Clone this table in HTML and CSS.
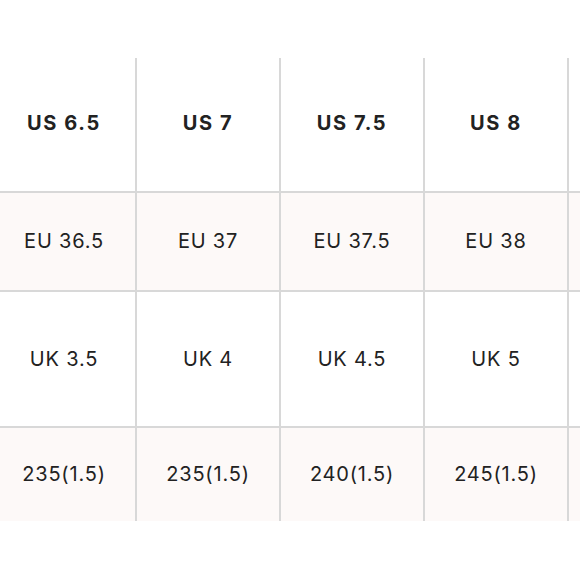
FILE: index.html
```html
<!DOCTYPE html>
<html>
<head>
<meta charset="utf-8">
<link rel="stylesheet" href="styles.css">
</head>
<body>
<div class="wrap">
  <div class="table">
    <div class="cell head">US 6.5</div>
    <div class="cell head">US 7</div>
    <div class="cell head">US 7.5</div>
    <div class="cell head">US 8</div>
    <div class="cell head"></div>

    <div class="cell alt">EU 36.5</div>
    <div class="cell alt">EU 37</div>
    <div class="cell alt">EU 37.5</div>
    <div class="cell alt">EU 38</div>
    <div class="cell alt"></div>

    <div class="cell">UK 3.5</div>
    <div class="cell">UK 4</div>
    <div class="cell">UK 4.5</div>
    <div class="cell">UK 5</div>
    <div class="cell"></div>

    <div class="cell alt">235(1.5)</div>
    <div class="cell alt">235(1.5)</div>
    <div class="cell alt">240(1.5)</div>
    <div class="cell alt">245(1.5)</div>
    <div class="cell alt"></div>
  </div>
</div>
</body>
</html>
```
FILE: styles.css
```css
html, body {
  margin: 0;
  padding: 0;
  background: #ffffff;
  overflow: hidden;
}
.wrap {
  width: 580px;
  height: 580px;
  overflow: hidden;
  padding-top: 58px;
  box-sizing: border-box;
}
.table {
  display: grid;
  grid-template-columns: repeat(5, 142px);
  grid-template-rows: 133px 97px 134px 93px;
  gap: 2px;
  background: #d8d8d8;
  margin-left: -7px;
  width: max-content;
}
.cell {
  background: #ffffff;
  display: flex;
  align-items: center;
  justify-content: center;
  padding-bottom: 1px;
  font-family: Inter, "Noto Sans", sans-serif;
  font-size: 20px;
  color: #222222;
  letter-spacing: 0.8px;
}
.cell.head {
  font-weight: 700;
  letter-spacing: 1.6px;
  padding-bottom: 3px;
}
.cell.alt {
  background: #fdf9f8;
}
```
